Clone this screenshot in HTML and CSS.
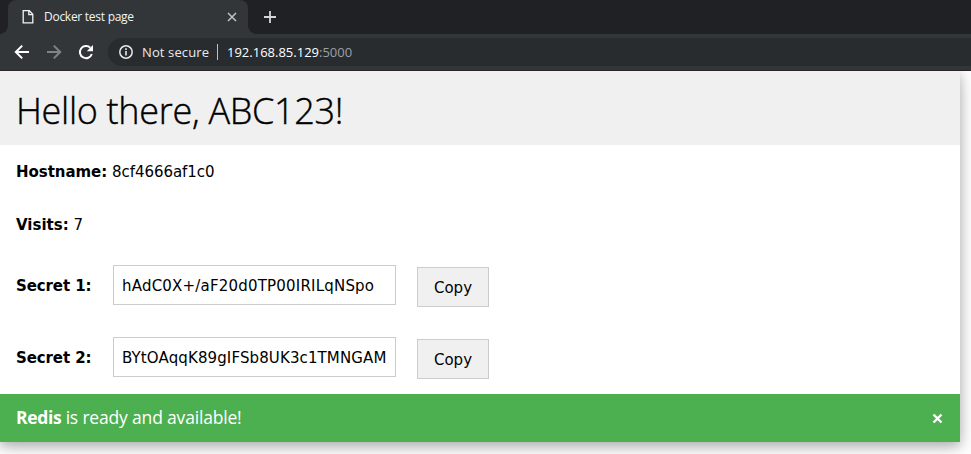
FILE: index.html
```html
<!DOCTYPE html>
<html lang="en">
<head>
<meta charset="utf-8">
<title>Docker test page</title>
<link rel="stylesheet" href="styles.css">
</head>
<body>
<header class="browser">
  <div class="tabs">
    <div class="tab">
      <svg class="page-icon" width="12" height="16" viewBox="0 0 12 16"><path d="M1.2 1.7h6.1l3.5 3.5v8.6H1.2zM6.8 1.7v4h4" fill="none" stroke="#f1f3f4" stroke-width="1.3"/></svg>
      <span class="tab-title">Docker test page</span>
      <svg class="tab-close" width="10" height="10" viewBox="0 0 10 10"><path d="M1 1l8 8M9 1L1 9" stroke="#c3c5c8" stroke-width="1.5"/></svg>
    </div>
    <svg class="new-tab" width="12" height="12" viewBox="0 0 12 12"><path d="M6 0v12M0 6h12" stroke="#d5d6d8" stroke-width="1.8"/></svg>
  </div>
  <nav class="toolbar">
    <svg width="16" height="16" viewBox="0 0 16 16"><path d="M15 8H2.2M8.2 1.6L1.8 8l6.4 6.4" fill="none" stroke="#fff" stroke-width="2"/></svg>
    <svg width="16" height="16" viewBox="0 0 16 16"><path d="M1 8h12.8M7.8 1.6L14.2 8l-6.4 6.4" fill="none" stroke="#818487" stroke-width="2"/></svg>
    <svg width="16" height="16" viewBox="0 0 16 16"><path d="M13.8 10A6.1 6.1 0 1 1 12.3 3.7" fill="none" stroke="#fff" stroke-width="2"/><path d="M15 1v6.2H8.8z" fill="#fff"/></svg>
    <div class="address">
      <svg width="14" height="14" viewBox="0 0 14 14"><circle cx="7" cy="7" r="6.2" fill="none" stroke="#e8eaed" stroke-width="1.5"/><path d="M7 6v4.6M7 3.2v1.7" stroke="#e8eaed" stroke-width="1.6"/></svg>
      <span class="security">Not secure</span>
      <span class="host">192.168.85.129<span class="port">:5000</span></span>
    </div>
  </nav>
</header>
<main class="card">
  <div class="banner"><h1>Hello there, ABC123!</h1></div>
  <p class="line hostname"><b>Hostname:</b> 8cf4666af1c0</p>
  <p class="line visits"><b>Visits:</b> 7</p>
  <div class="secret"><b>Secret 1:</b><input class="first" type="text" value="hAdC0X+/aF20d0TP00IRILqNSpo" readonly><button>Copy</button></div>
  <div class="secret"><b>Secret 2:</b><input type="text" value="BYtOAqqK89gIFSb8UK3c1TMNGAM" readonly><button>Copy</button></div>
  <footer class="status"><span class="message"><b>Redis</b> is ready and available!</span><svg width="11" height="11" viewBox="0 0 11 11"><path d="M1.5 1.5l8 8M9.5 1.5l-8 8" stroke="#fff" stroke-width="2.4"/></svg></footer>
</main>
</body>
</html>
```
FILE: styles.css
```css
* { box-sizing: border-box; }
body { margin: 0; height: 454px; overflow: hidden; background: #fff; color: #000; font: 15px/22px "DejaVu Sans", Verdana, sans-serif; }
svg { display: block; flex: none; }
.browser { position: relative; z-index: 1; height: 71px; background: #323639; border-bottom: 1px solid #292528; font-family: "Open Sans", "Segoe UI", sans-serif; }
.tabs { display: flex; align-items: center; height: 34px; background: #202124; padding-left: 8px; }
.tab { position: relative; display: flex; align-items: center; width: 240px; height: 34px; padding: 0 11px 0 14px; border-radius: 8px 8px 0 0; background: #323639; }
.tab::before, .tab::after { content: ""; position: absolute; bottom: 0; width: 8px; height: 8px; }
.tab::before { left: -8px; background: radial-gradient(circle at 0 0, #202124 7.5px, #323639 8px); }
.tab::after { right: -8px; background: radial-gradient(circle at 100% 0, #202124 7.5px, #323639 8px); }
.tab-title { margin-left: 10px; color: #f1f3f4; font-size: 12px; letter-spacing: -.27px; white-space: nowrap; }
.tab-close { margin-left: auto; }
.new-tab { margin-left: 16px; }
.toolbar { display: flex; align-items: center; gap: 16px; height: 36px; padding-left: 14px; }
.address { display: flex; align-items: center; flex: 1; height: 28px; margin-left: -2px; padding-left: 11px; border-radius: 14px 0 0 14px; background: #282c2f; font-size: 13px; line-height: 16px; white-space: nowrap; }
.security { width: 76px; margin-left: 9px; border-right: 1px solid #bdc1c6; color: #e8eaed; letter-spacing: .12px; }
.host { margin-left: 9px; color: #fff; }
.port { color: #9aa0a6; }
.card { width: 960px; height: 371px; box-shadow: 0 4px 10px 0 rgba(0,0,0,.2), 0 4px 20px 0 rgba(0,0,0,.19); }
.banner { display: flex; align-items: center; height: 74px; padding: 5px 16px 0; background: #f0f0f0; }
h1 { margin: 0; font: 300 36px/54px "Open Sans", "Segoe UI", sans-serif; letter-spacing: -.3px; white-space: nowrap; -webkit-text-stroke: .4px #000; }
.line { margin: 0; padding-left: 16px; white-space: nowrap; }
.hostname { padding-top: 16px; height: 53px; letter-spacing: -.04px; }
.visits { padding-top: 16px; height: 67px; }
.secret { display: flex; align-items: flex-start; height: 72px; padding-left: 16px; }
.secret b { width: 97px; padding-top: 10px; letter-spacing: -.1px; white-space: nowrap; }
input { width: 283px; height: 40px; padding: 9px 8px 7px; border: 1px solid #ccc; background: #fff; color: #000; font: inherit; letter-spacing: .12px; }
.first { letter-spacing: .2px; }
button { width: 72px; height: 40px; margin: 2px 0 0 21px; padding: 2px 0 0; border: 1px solid #ccc; background: #f0f0f0; color: #000; font: inherit; }
.status { display: flex; align-items: center; justify-content: space-between; height: 48px; margin-top: -15px; padding: 0 17px 0 16px; background: #4caf50; color: #fff; font: 17.5px/27px "Open Sans", "Segoe UI", sans-serif; }
.message { padding-bottom: 1px; letter-spacing: -.18px; }
.message b { letter-spacing: -.35px; }
```
